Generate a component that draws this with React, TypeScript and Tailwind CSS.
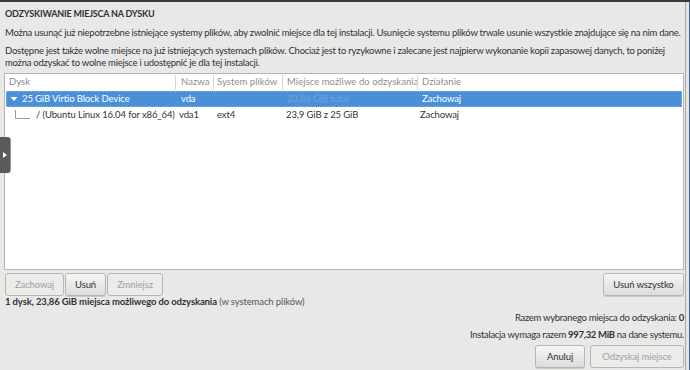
import React from "react";

const font = { fontFamily: "Lato, 'Liberation Sans', sans-serif" };

function Btn({
  label,
  disabled,
  className = "",
}: {
  label: string;
  disabled?: boolean;
  className?: string;
}) {
  return (
    <button
      className={
        "h-[23px] rounded-[3px] border border-[#b6b6b3] text-[9.5px] leading-none " +
        (disabled
          ? "bg-[#ebebea] text-[#a1a39f] "
          : "bg-gradient-to-b from-[#f6f6f5] to-[#dcdcda] text-[#2e3436] shadow-[0_1px_0_#c9c9c6] ") +
        className
      }
    >
      {label}
    </button>
  );
}

const cols = "grid grid-cols-[170px_38px_69px_135px_1fr] whitespace-nowrap";

export default function App() {
  return (
    <div
      className="relative h-[370px] w-[690px] overflow-hidden bg-[#e8e8e7] text-[#2e3436]"
      style={font}
    >
      <div className="h-[2px] bg-[#3a3a3a]" />
      <div className="flex h-[368px]">
        <div className="flex w-[685px] flex-col pl-[4px] pr-[1px] text-[9.5px] tracking-[-0.12px]">
          <h1 className="mt-[5px] pl-[1px] text-[9px] font-bold leading-[13px] tracking-[-0.2px]">
            ODZYSKIWANIE MIEJSCA NA DYSKU
          </h1>
          <p className="mt-[6px] whitespace-nowrap pl-[1px] leading-[13px] tracking-[-0.25px]">
            Można usunąć już niepotrzebne istniejące systemy plików, aby zwolnić miejsce dla tej instalacji.
            Usunięcie systemu plików trwale usunie wszystkie znajdujące się na nim dane.
          </p>
          <p className="mt-[6px] whitespace-nowrap pl-[1px] leading-[12px] tracking-[-0.25px]">
            Dostępne jest także wolne miejsce na już istniejących systemach plików. Chociaż jest to ryzykowne i
            zalecane jest najpierw wykonanie kopii zapasowej danych, to poniżej
            <br />
            można odzyskać to wolne miejsce i udostępnić je dla tej instalacji.
          </p>

          <div className="mt-[4px] h-[197px] border border-[#b6b6b3] bg-white">
            <div className={cols + " h-[17px] items-center text-[9.5px] tracking-[0.05px] text-[#8b8e8f]"}>
              <div className="pl-[4px]">Dysk</div>
              <div className="border-l border-[#d6d6d3] pl-[5px]">Nazwa</div>
              <div className="border-l border-[#d6d6d3] pl-[3px]">System plików</div>
              <div className="border-l border-[#d6d6d3] pl-[4px]">Miejsce możliwe do odzyskania</div>
              <div className="border-l border-[#d6d6d3] pl-[4px]">Działanie</div>
            </div>
            <div
              className={
                cols + " mx-[1px] h-[16px] items-center border border-dotted border-[#7fb0e6] bg-[#4a90d9] text-white"
              }
            >
              <div className="flex items-center pl-[3px]">
                <svg width="8" height="8" viewBox="0 0 8 8" className="mr-[4px]">
                  <path d="M0.5 2 L7.5 2 L4 6 Z" fill="#fff" />
                </svg>
                25 GiB Virtio Block Device
              </div>
              <div className="pl-[4px]">vda</div>
              <div />
              <div className="pl-[3px] text-[#72a3da]">23,86 GiB total</div>
              <div className="pl-[3px]">Zachowaj</div>
            </div>
            <div className={cols + " h-[17px] items-center"}>
              <div className="flex items-center pl-[10px]">
                <svg width="16" height="12" viewBox="0 0 16 12" className="mr-[5px] shrink-0">
                  <path d="M0.5 0 L0.5 8.5 L15 8.5" fill="none" stroke="#9a9a98" strokeWidth="1" />
                </svg>
                / (Ubuntu Linux 16.04 for x86_64)
              </div>
              <div className="pl-[4px]">vda1</div>
              <div className="pl-[4px]">ext4</div>
              <div className="pl-[4px]">23,9 GiB z 25 GiB</div>
              <div className="pl-[3px]">Zachowaj</div>
            </div>
          </div>

          <div className="mt-[3px] flex items-center">
            <div className="flex gap-[1px] pl-[1px]">
              <Btn label="Zachowaj" disabled className="w-[59px]" />
              <Btn label="Usuń" className="w-[41px]" />
              <Btn label="Zmniejsz" disabled className="w-[56px]" />
            </div>
            <Btn label="Usuń wszystko" className="ml-auto w-[81px]" />
          </div>

          <p className="pl-[1px] leading-[12px]">
            <b>1 dysk, 23,86 GiB miejsca możliwego do odzyskania</b>{" "}
            <span className="text-[#555753]">(w systemach plików)</span>
          </p>
          <p className="mt-[3px] text-right leading-[13px] tracking-[-0.3px]">
            Razem wybranego miejsca do odzyskania: <b>0</b>
          </p>
          <p className="mt-[4px] text-right leading-[13px] tracking-[-0.3px]">
            Instalacja wymaga razem <b>997,32 MiB</b> na dane systemu.
          </p>
          <div className="mt-[4px] flex justify-end gap-[5px]">
            <Btn label="Anuluj" className="w-[50px]" />
            <Btn label="Odzyskaj miejsce" disabled className="w-[94px]" />
          </div>
        </div>
        <div className="w-[1px] bg-[#a9a9a7]" />
        <div className="w-[3px] bg-[#e4e4e3]" />
        <div className="w-[1px] bg-[#3d5f9a]" />
      </div>

      <div className="absolute left-0 top-[137px] flex h-[36px] w-[10px] items-center justify-center rounded-r-[3px] bg-[#5a5a5a] shadow-[1px_0_0_#9a9a9a]">
        <svg width="4" height="6" viewBox="0 0 4 6">
          <path d="M0 0 L4 3 L0 6 Z" fill="#fff" />
        </svg>
      </div>
    </div>
  );
}
